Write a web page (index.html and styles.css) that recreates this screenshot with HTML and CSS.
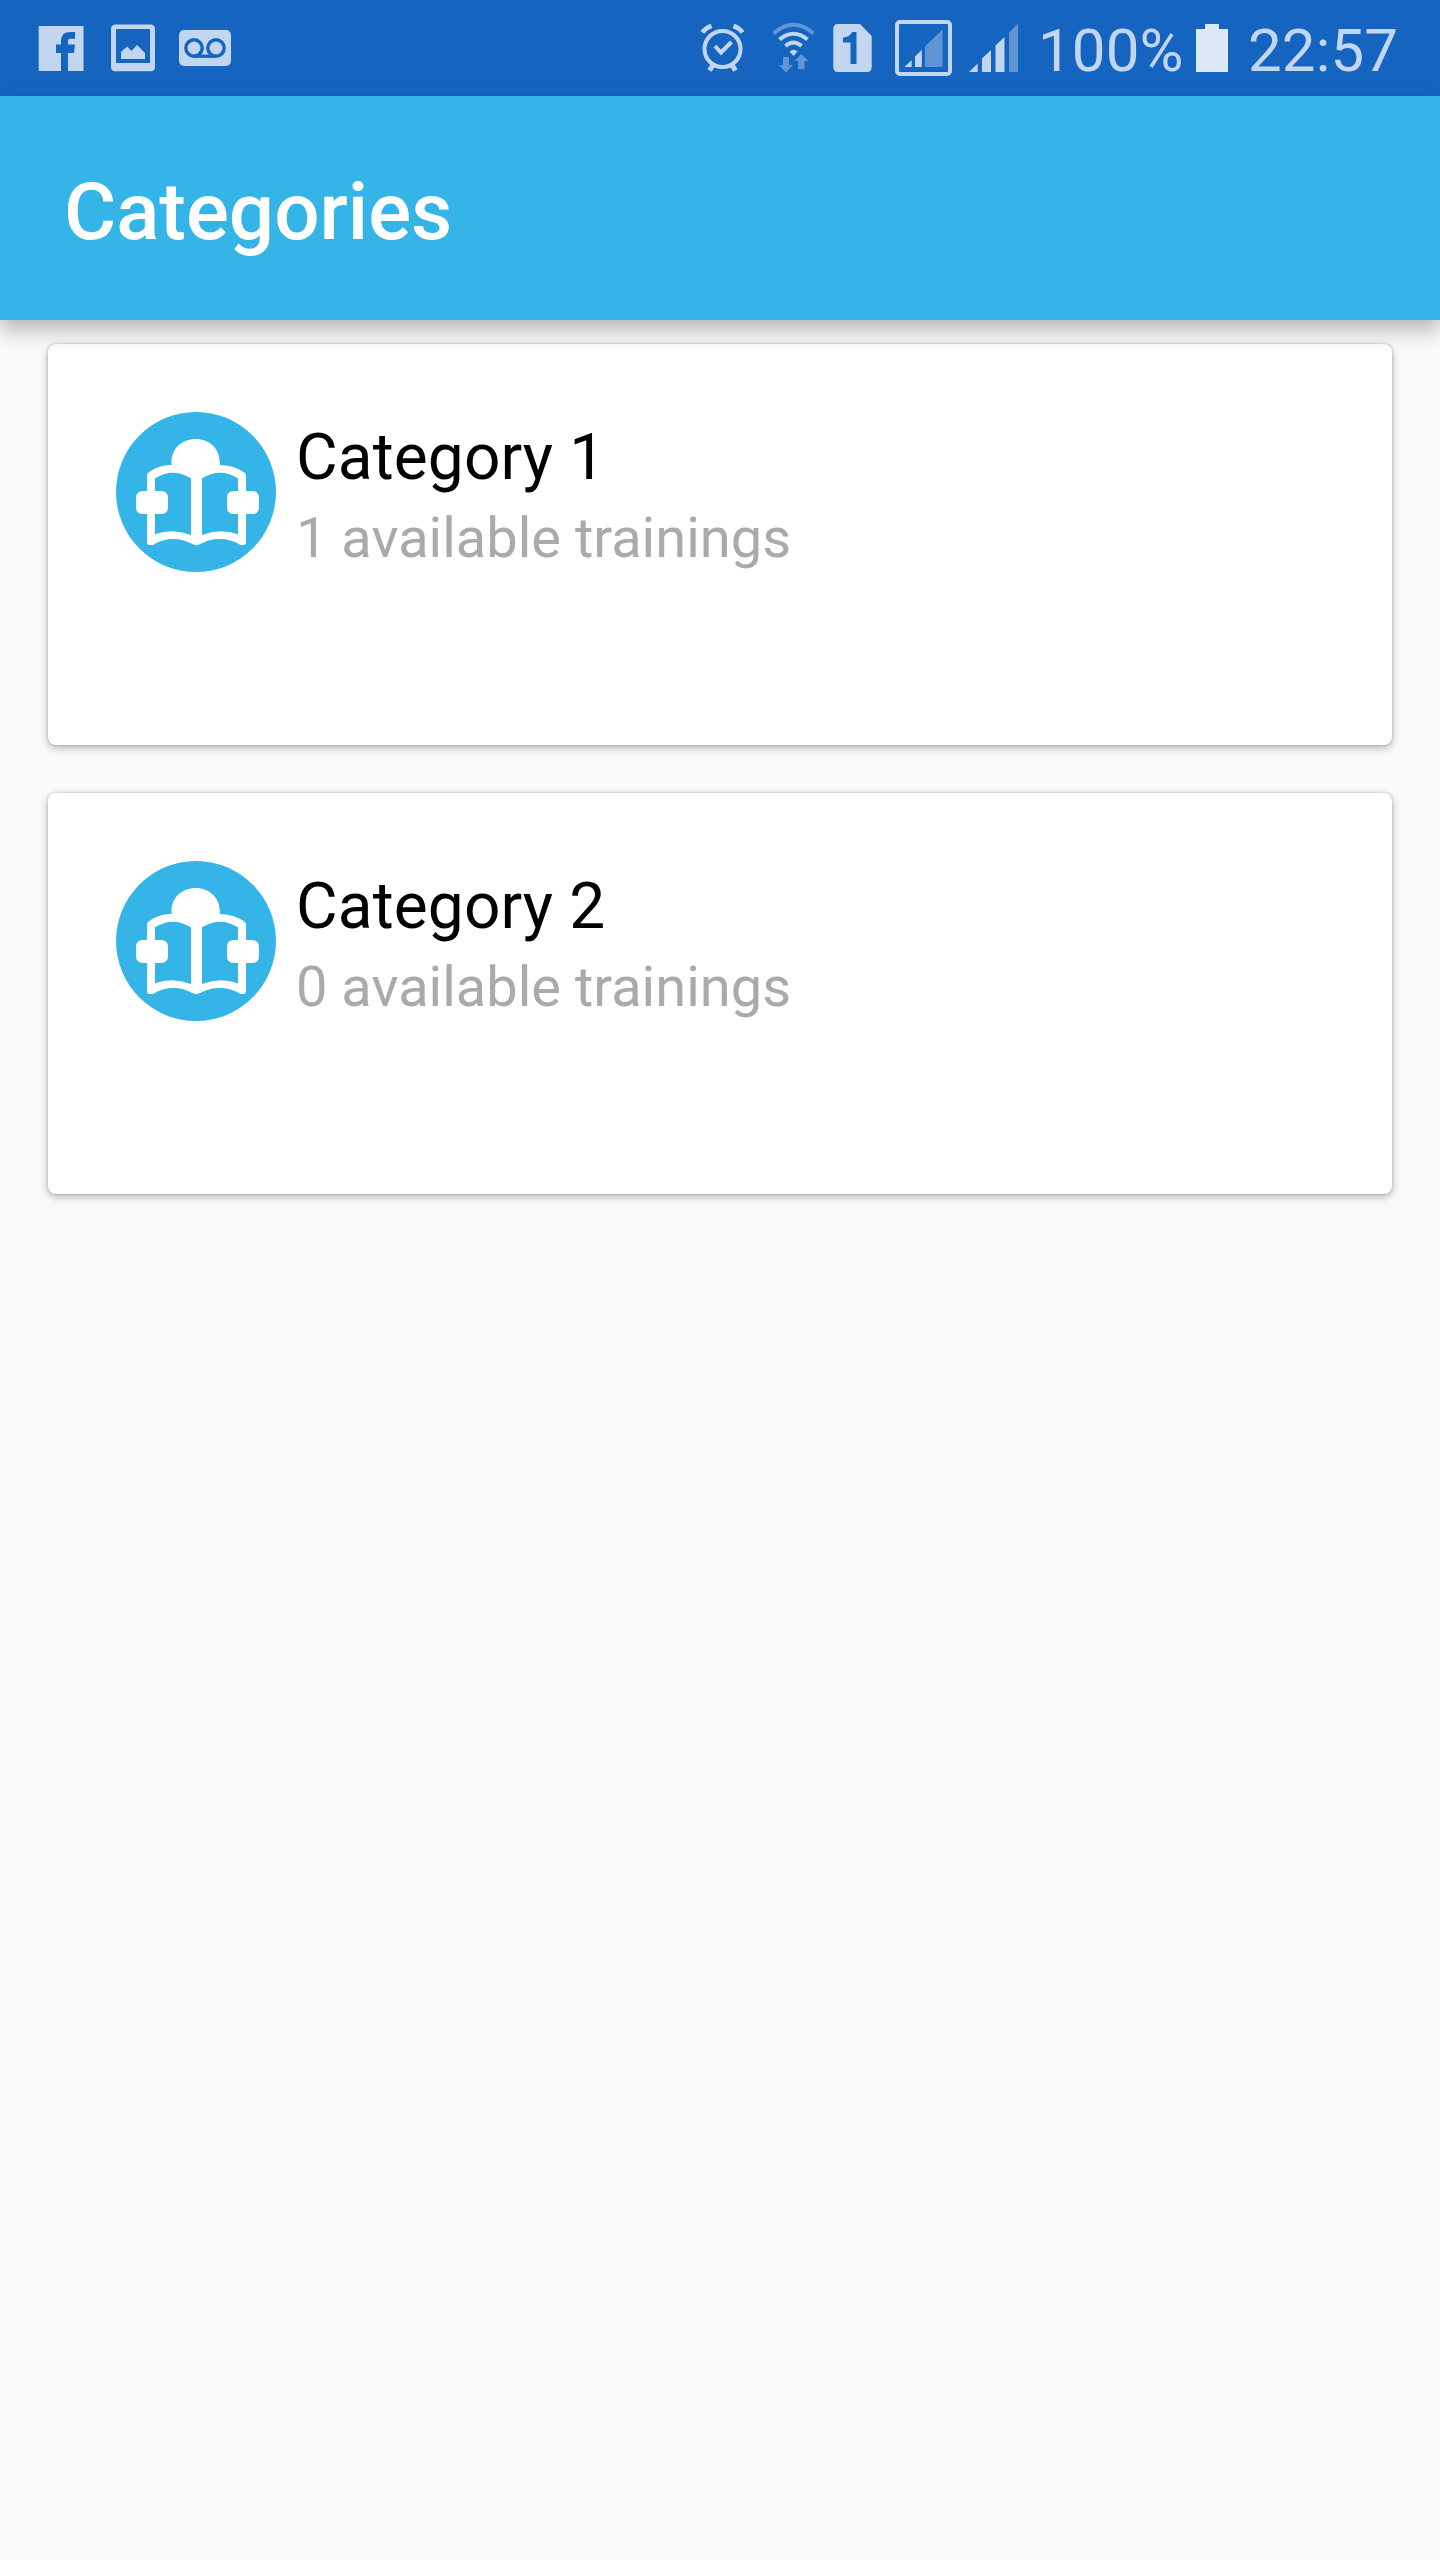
FILE: index.html
```html
<!DOCTYPE html>
<html lang="en">
<head>
<meta charset="utf-8">
<title>Categories</title>
<link rel="stylesheet" href="styles.css">
</head>
<body>
<svg width="0" height="0" class="defs" aria-hidden="true">
  <symbol id="reader" viewBox="48 36 480 480">
    <circle cx="288" cy="276" r="240" fill="#34b4e7"/>
    <path fill="#fff" d="M215 195C210 150 243 117 287 117S363 150 359 195C388 195 413 204 434 218Q438 221 438 227V273H456Q477 273 477 294V321Q477 342 456 342H438V426Q438 435 430 435H422C383 412 339 411 299 433Q289 438 279 433C239 411 196 412 159 435H149Q141 435 141 426V342H129Q108 342 108 321V294Q108 273 129 273H141V227Q141 221 145 218C166 203 188 195 215 195Z"/>
    <path fill="#34b4e7" d="M165 235Q219 201 273 235V405Q219 384 165 403V342H183Q204 342 204 321V294Q204 273 183 273H165ZM306 235Q360 201 414 235V273H402Q381 273 381 294V321Q381 342 402 342H414V403Q360 384 306 405Z"/>
  </symbol>
</svg>
<header class="status">
  <div class="notifications">
    <svg width="46" height="96" viewBox="38 0 46 96"><path fill="#c3d6ef" d="M38.7 26H83.5V71H68V53H74L75 44.5H68V41Q68 38.8 70.5 38.8H75V32H70Q61 32 61 41V44.5H56V53H61V71H38.7Z"/></svg>
    <svg width="44" height="96" viewBox="111 0 44 96"><path fill="#c3d6ef" fill-rule="evenodd" d="M115 24.5H151Q155 25 155 29V67Q155 71 151 71.3H115Q111 71 111 67V29Q111 25 115 24.5ZM116 29V63H150V29ZM121 59V52L127 46.5 131.5 51 137 45 145 53V59Z"/></svg>
    <svg width="52" height="96" viewBox="179 0 52 96"><rect x="179" y="30" width="52" height="36" rx="5" fill="#c3d6ef"/><g fill="none" stroke="#1565c0" stroke-width="3.4"><circle cx="194" cy="48" r="8.2"/><circle cx="216" cy="48" r="8.2"/><path d="M194 56.2H216"/></g></svg>
  </div>
  <div class="indicators">
    <svg class="alarm" width="45" height="96" viewBox="700 0 45 96"><g fill="none" stroke="#c3d6ef" stroke-width="4"><circle cx="722.5" cy="49" r="18"/><path d="M715 46 721 52.5 731.5 42"/><path stroke-width="4.6" d="M702.5 32.5Q705.5 28 711.5 26M742.5 32.5Q739.5 28 733.5 26"/><path stroke-width="5" d="M713 65 709.5 70.5M732 65 735.5 70.5"/></g></svg>
    <svg class="wifi" width="44" height="96" viewBox="772 0 44 96"><g fill="none" stroke="#c3d6ef" stroke-width="4"><path stroke="#6095d5" d="M773.5 33.5Q793.5 16 813.5 33.5"/><path d="M779.5 39.5Q793.5 28 807.5 39.5"/><path d="M785.5 46Q793.5 39 801.5 46"/></g><path fill="#c3d6ef" d="M789.5 51.5Q793.5 48 797.5 51.5L793.5 56Z"/><path fill="#6095d5" d="M783 57H789V65H793L786 72.5 779 65H783ZM798 69H804.5V61H808.5L801.3 54 794.5 61H798Z"/></svg>
    <svg class="sim" width="39" height="96" viewBox="833 0 39 96"><path fill="#c3d6ef" fill-rule="evenodd" d="M838 24H860L871.7 36V67Q871.7 72 867 72H838Q833.3 72 833.3 67V29Q833.3 24 838 24ZM852 32Q850 37 843 37.5V42.5H850.5V64H856.5V32Z"/></svg>
    <svg class="roaming" width="57" height="96" viewBox="895 0 57 96"><rect x="897" y="22" width="53" height="52" rx="3" fill="none" stroke="#c3d6ef" stroke-width="4"/><path fill="#c3d6ef" d="M904.5 67 911.7 60V67ZM915 67V56.5L921.8 50V67Z"/><path fill="#6095d5" d="M925 67V46.5L942.5 29.5V67Z"/></svg>
    <svg class="signal" width="50" height="96" viewBox="969 0 50 96"><path fill="#c3d6ef" d="M969 72 977.7 63.5V72ZM982 72V58.5L991 50V72ZM995.5 72V45.5L1004.5 37V72Z"/><path fill="#6095d5" d="M1009 72V32.5L1018 23.5V72Z"/></svg>
    <span class="percent">100%</span>
    <svg class="battery" width="32" height="96" viewBox="1196 0 32 96"><path fill="#dbe8f5" d="M1196 29H1205V24H1219V29H1228V72H1196Z"/></svg>
    <span class="clock">22:57</span>
  </div>
</header>
<div class="appbar"><h1>Categories</h1></div>
<main>
  <section class="card">
    <svg class="avatar"><use href="#reader"/></svg>
    <div class="info"><h2>Category 1</h2><p>1 available trainings</p></div>
  </section>
  <section class="card">
    <svg class="avatar"><use href="#reader"/></svg>
    <div class="info"><h2>Category 2</h2><p>0 available trainings</p></div>
  </section>
</main>
</body>
</html>
```
FILE: styles.css
```css
* { box-sizing: border-box; margin: 0; padding: 0; }
body { width: 1440px; min-height: 2560px; display: flex; flex-direction: column; background: #fafafa; font-family: Roboto, "Noto Sans", sans-serif; }
svg { display: block; flex: none; }
.defs { position: absolute; }
.status { height: 96px; background: #1565c0; display: flex; justify-content: space-between; color: #c3d6ef; }
.notifications { display: flex; padding-left: 38px; }
.notifications svg:nth-child(2) { margin: 0 24px 0 27px; }
.indicators { display: flex; width: 740px; }
.wifi { margin-left: 27px; }
.sim { margin-left: 17px; }
.roaming { margin-left: 23px; }
.signal { margin-left: 17px; }
.percent, .clock { font-size: 60px; line-height: 60px; padding-top: 21px; letter-spacing: .15px; white-space: nowrap; }
.percent { width: 177px; padding-left: 19px; }
.clock { padding-left: 20px; }
.appbar { height: 224px; padding: 8px 0 0 64px; background: #34b4e7; color: #fff; display: flex; align-items: center; position: relative; z-index: 1; box-shadow: 0 10px 20px rgba(0, 0, 0, .28); }
h1 { font-size: 80px; font-weight: 500; line-height: 94px; }
main { display: flex; flex-direction: column; gap: 48px; padding: 24px 48px; }
.card { height: 401px; display: flex; gap: 20px; padding: 68px; background: #fff; border-radius: 8px; box-shadow: 0 3px 8px rgba(0, 0, 0, .28), 0 0 3px rgba(0, 0, 0, .2); }
.avatar { width: 160px; height: 160px; }
.info { padding-top: 8px; }
h2 { font-size: 64px; font-weight: 400; line-height: 75px; letter-spacing: .12px; color: #000; }
p { margin-top: 10px; font-size: 56px; line-height: 66px; color: #aaa; }
```
